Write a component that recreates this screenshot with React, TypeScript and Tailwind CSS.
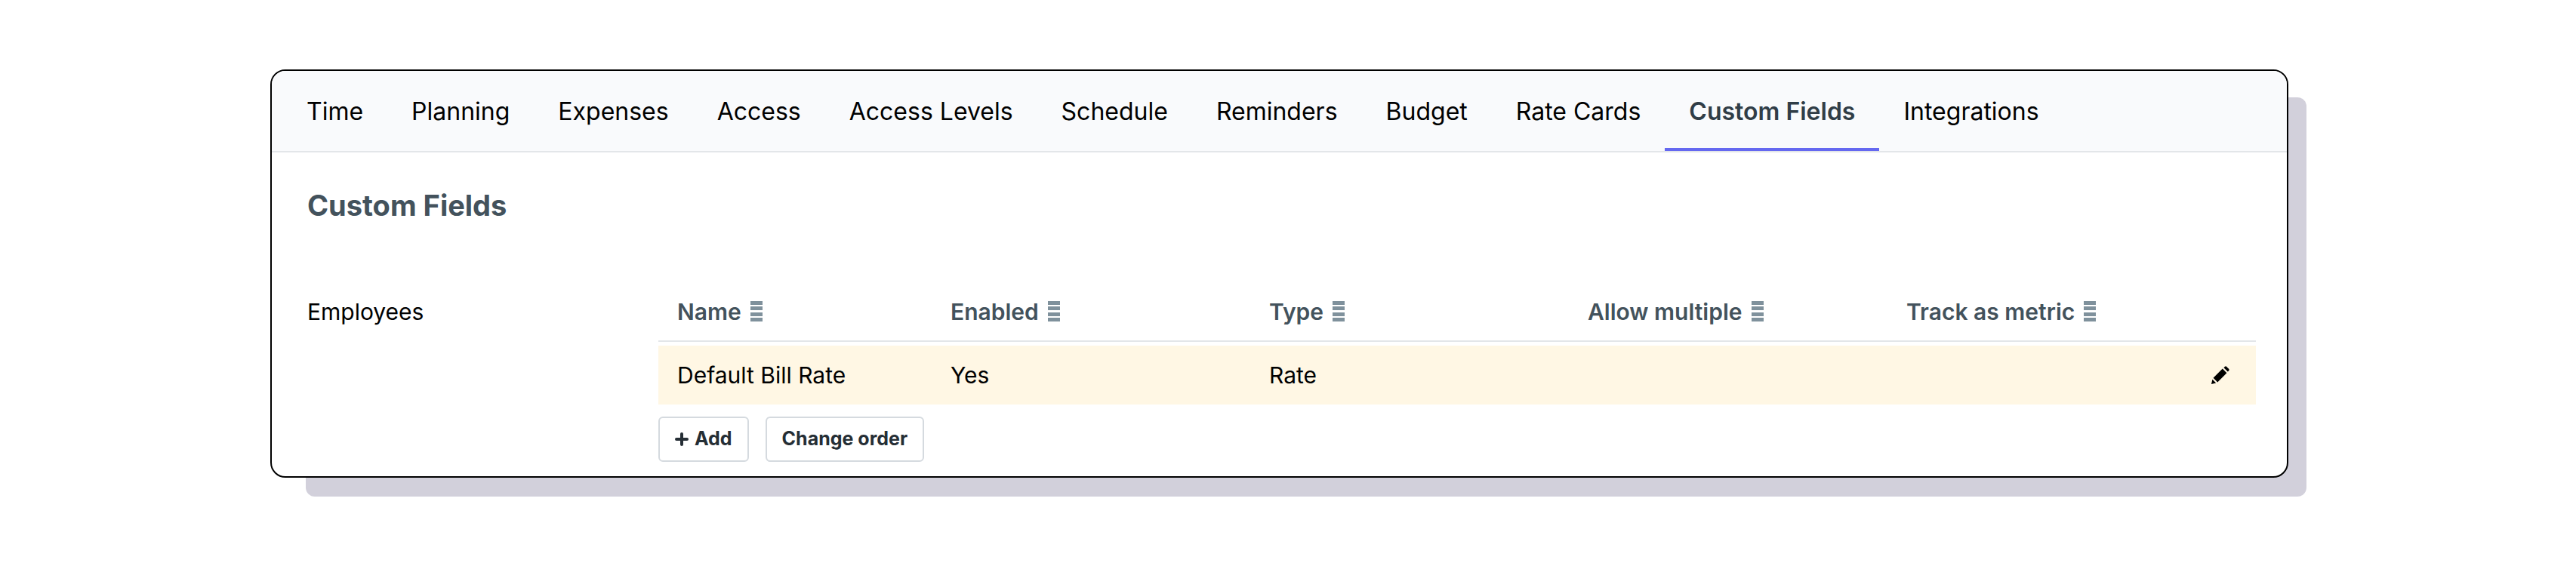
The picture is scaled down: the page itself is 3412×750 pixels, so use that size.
const tabs = [
  'Time',
  'Planning',
  'Expenses',
  'Access',
  'Access Levels',
  'Schedule',
  'Reminders',
  'Budget',
  'Rate Cards',
  'Custom Fields',
  'Integrations',
];

const columns = ['Name', 'Enabled', 'Type', 'Allow multiple', 'Track as metric'];

const fields = [
  { name: 'Default Bill Rate', enabled: 'Yes', type: 'Rate', multiple: '', metric: '' },
];

function GripIcon() {
  return (
    <svg className="w-4 h-[27px] shrink-0" viewBox="0 0 16 27" fill="#7f919c" aria-hidden="true">
      <rect y="0" width="16" height="5" />
      <rect y="7" width="16" height="5" />
      <rect y="15" width="16" height="5" />
      <rect y="22" width="16" height="5" />
    </svg>
  );
}

function PlusIcon() {
  return (
    <svg className="w-[18px] h-[18px]" viewBox="0 0 18 18" stroke="currentColor" strokeWidth="4" strokeLinecap="round" aria-hidden="true">
      <path d="M9 2v14M2 9h14" />
    </svg>
  );
}

function PencilIcon() {
  return (
    <svg className="w-6 h-6" viewBox="0 0 24 24" fill="currentColor" aria-hidden="true">
      <path d="M0 24 1.4 17.8 6.2 22.6Z" />
      <path d="M2.6 15.8 14.8 3.6 20.4 9.2 8.2 21.4Z" />
      <path d="M16.4 2.2 18 .7Q19 0 20 .7L23.3 4Q24 5 23.3 6L21.8 7.6Z" />
    </svg>
  );
}

export default function App() {
  return (
    <main className="bg-white pt-[92px] pb-[117px] pl-[358px] pr-[381px] font-['Inter',sans-serif] text-black">
      <div className="relative">
        <div className="absolute top-[37px] left-[47px] -right-6 -bottom-[25px] rounded-xl bg-[#d2d0db]" />
        <div className="relative overflow-hidden rounded-[20px] border-2 border-black bg-white">
          <nav className="flex h-[108px] border-b-2 border-[#e3e6e9] bg-[#f9fafc] pl-[14px]">
            {tabs.map((tab) => (
              <a
                key={tab}
                href="#"
                aria-current={tab === 'Custom Fields' ? 'page' : undefined}
                className={`flex items-center px-8 pt-[6px] text-[32px] leading-10 whitespace-nowrap border-b-4 ${
                  tab === 'Custom Fields'
                    ? 'border-[#6568f0] font-semibold text-[#303d47]'
                    : 'border-transparent'
                }`}
              >
                {tab}
              </a>
            ))}
          </nav>

          <div className="pt-[46px] pb-[19px] pl-[47px] pr-[41px]">
            <h1 className="text-[38px] leading-[48px] font-bold text-[#43525c]">Custom Fields</h1>

            <section className="mt-[78px] flex">
              <h2 className="w-[465px] shrink-0 text-[30px] leading-[78px]">Employees</h2>
              <div className="flex-1">
                <table className="w-full table-fixed text-left text-[30px] leading-10">
                  <thead>
                    <tr className="h-[78px] border-b-2 border-[#e3e6e9] text-[#43525c]">
                      {columns.map((column, i) => (
                        <th key={column} className={`pl-[25px] font-semibold ${i === 0 ? '' : 'w-[422px]'}`}>
                          <span className="flex items-center gap-3 whitespace-nowrap">
                            {column}
                            <GripIcon />
                          </span>
                        </th>
                      ))}
                      <th className="w-[66px]" />
                    </tr>
                  </thead>
                  <tbody>
                    <tr className="h-[6px]" aria-hidden="true" />
                    {fields.map((field) => (
                      <tr key={field.name} className="h-[78px] bg-[#fff7e4]">
                        <td className="pl-[25px] whitespace-nowrap">{field.name}</td>
                        <td className="pl-[25px]">{field.enabled}</td>
                        <td className="pl-[25px]">{field.type}</td>
                        <td className="pl-[25px]">{field.multiple}</td>
                        <td className="pl-[25px]">{field.metric}</td>
                        <td className="pl-[7px]">
                          <button aria-label="Edit field" className="block cursor-pointer">
                            <PencilIcon />
                          </button>
                        </td>
                      </tr>
                    ))}
                  </tbody>
                </table>

                <div className="mt-4 flex gap-[22px] text-[25px] font-bold text-[#252e35]">
                  <button className="flex h-[60px] cursor-pointer items-center gap-2 rounded-md border-2 border-[#d5dadf] px-5">
                    <PlusIcon />
                    Add
                  </button>
                  <button className="h-[60px] cursor-pointer rounded-md border-2 border-[#d5dadf] px-5">
                    Change order
                  </button>
                </div>
              </div>
            </section>
          </div>
        </div>
      </div>
    </main>
  );
}
